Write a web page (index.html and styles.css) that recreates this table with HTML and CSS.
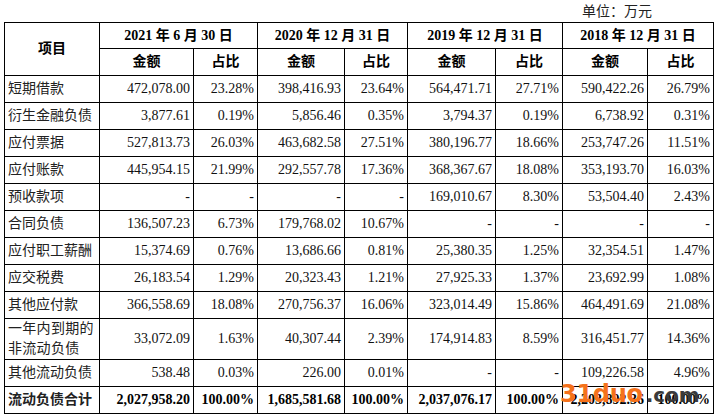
FILE: index.html
```html
<!DOCTYPE html>
<html lang="zh">
<head>
<meta charset="utf-8">
<link rel="stylesheet" href="styles.css">
</head>
<body>
<div class="page">
  <div class="unit">单位：万元</div>
  <table class="sheet">
    <colgroup>
      <col class="c-label"><col class="c1"><col class="c2"><col class="c3"><col class="c4"><col class="c5"><col class="c6"><col class="c7"><col class="c8">
    </colgroup>
    <thead>
      <tr class="h1">
        <th rowspan="2" class="label-head">项目</th>
        <th colspan="2">2021 年 6 月 30 日</th>
        <th colspan="2">2020 年 12 月 31 日</th>
        <th colspan="2">2019 年 12 月 31 日</th>
        <th colspan="2">2018 年 12 月 31 日</th>
      </tr>
      <tr class="h2">
        <th>金额</th><th>占比</th><th>金额</th><th>占比</th><th>金额</th><th>占比</th><th>金额</th><th>占比</th>
      </tr>
    </thead>
    <tbody>
      <tr><td class="lbl">短期借款</td><td>472,078.00</td><td>23.28%</td><td>398,416.93</td><td>23.64%</td><td>564,471.71</td><td>27.71%</td><td>590,422.26</td><td>26.79%</td></tr>
      <tr><td class="lbl">衍生金融负债</td><td>3,877.61</td><td>0.19%</td><td>5,856.46</td><td>0.35%</td><td>3,794.37</td><td>0.19%</td><td>6,738.92</td><td>0.31%</td></tr>
      <tr><td class="lbl">应付票据</td><td>527,813.73</td><td>26.03%</td><td>463,682.58</td><td>27.51%</td><td>380,196.77</td><td>18.66%</td><td>253,747.26</td><td>11.51%</td></tr>
      <tr><td class="lbl">应付账款</td><td>445,954.15</td><td>21.99%</td><td>292,557.78</td><td>17.36%</td><td>368,367.67</td><td>18.08%</td><td>353,193.70</td><td>16.03%</td></tr>
      <tr><td class="lbl">预收款项</td><td>-</td><td>-</td><td>-</td><td>-</td><td>169,010.67</td><td>8.30%</td><td>53,504.40</td><td>2.43%</td></tr>
      <tr><td class="lbl">合同负债</td><td>136,507.23</td><td>6.73%</td><td>179,768.02</td><td>10.67%</td><td>-</td><td>-</td><td>-</td><td>-</td></tr>
      <tr><td class="lbl">应付职工薪酬</td><td>15,374.69</td><td>0.76%</td><td>13,686.66</td><td>0.81%</td><td>25,380.35</td><td>1.25%</td><td>32,354.51</td><td>1.47%</td></tr>
      <tr><td class="lbl">应交税费</td><td>26,183.54</td><td>1.29%</td><td>20,323.43</td><td>1.21%</td><td>27,925.33</td><td>1.37%</td><td>23,692.99</td><td>1.08%</td></tr>
      <tr><td class="lbl">其他应付款</td><td>366,558.69</td><td>18.08%</td><td>270,756.37</td><td>16.06%</td><td>323,014.49</td><td>15.86%</td><td>464,491.69</td><td>21.08%</td></tr>
      <tr class="tall"><td class="lbl spaced">一年内到期的<br>非流动负债</td><td>33,072.09</td><td>1.63%</td><td>40,307.44</td><td>2.39%</td><td>174,914.83</td><td>8.59%</td><td>316,451.77</td><td>14.36%</td></tr>
      <tr><td class="lbl">其他流动负债</td><td>538.48</td><td>0.03%</td><td>226.00</td><td>0.01%</td><td>-</td><td>-</td><td>109,226.58</td><td>4.96%</td></tr>
      <tr class="total"><td class="lbl">流动负债合计</td><td>2,027,958.20</td><td>100.00%</td><td>1,685,581.68</td><td>100.00%</td><td>2,037,076.17</td><td>100.00%</td><td>2,203,892.36</td><td>100.00%</td></tr>
    </tbody>
  </table>
  <div class="watermark"><span class="wm-main">31duo</span><span class="wm-dot">.com</span></div>
</div>
</body>
</html>
```

FILE: styles.css
```css
html, body {
  margin: 0;
  padding: 0;
  background: #ffffff;
}

.page {
  position: relative;
  width: 721px;
  height: 415px;
  padding-left: 4px;
  box-sizing: border-box;
  font-family: "Liberation Serif", "Noto Sans CJK SC", serif;
  color: #111;
}

.unit {
  width: 709px;
  height: 22px;
  box-sizing: border-box;
  padding-right: 61px;
  padding-top: 3px;
  text-align: right;
  font-size: 14px;
  line-height: 18px;
  color: #222;
}

.sheet {
  border-collapse: collapse;
  table-layout: fixed;
  width: 710px;
  font-size: 14px;
}

.c-label { width: 95px; }
.c1 { width: 94px; }
.c2 { width: 64px; }
.c3 { width: 87px; }
.c4 { width: 63px; }
.c5 { width: 88px; }
.c6 { width: 67px; }
.c7 { width: 85px; }
.c8 { width: 66px; }

.sheet th,
.sheet td {
  border: 1px solid #000;
  padding: 0 3px;
  line-height: 18px;
  white-space: nowrap;
  overflow: hidden;
}

.sheet th {
  font-weight: bold;
  text-align: center;
  color: #000;
}

.h1 th { height: 25px; }
.h2 th { height: 26px; }

.sheet td {
  height: 26px;
  text-align: right;
}

.sheet td.lbl {
  text-align: left;
  color: #222;
}

.tall td { height: 36px; }

.spaced {
  line-height: 20px !important;
  letter-spacing: 0.3px;
}

.total td {
  font-weight: bold;
  color: #000;
}

.watermark {
  position: absolute;
  left: 560px;
  top: 380px;
  display: flex;
  align-items: baseline;
  font-family: "DejaVu Sans", sans-serif;
  font-weight: bold;
  line-height: 28px;
}

.wm-main {
  font-size: 24px;
  color: #f5721c;
  letter-spacing: -0.3px;
}

.wm-dot {
  font-size: 20px;
  color: #3a3a3a;
  margin-left: 3px;
}
```
